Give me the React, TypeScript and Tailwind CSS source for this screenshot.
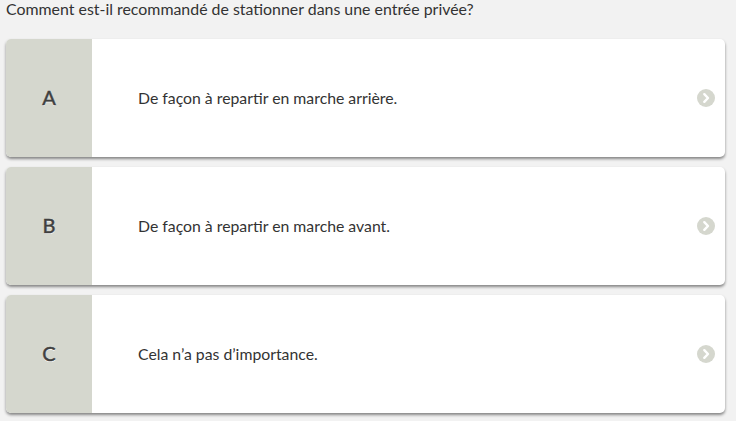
import React from 'react';

const ANSWERS = [
  { letter: 'A', text: 'De façon à repartir en marche arrière.' },
  { letter: 'B', text: 'De façon à repartir en marche avant.' },
  { letter: 'C', text: 'Cela n’a pas d’importance.' },
];

function Chevron() {
  return (
    <svg width="18" height="18" viewBox="0 0 18 18" className="shrink-0">
      <circle cx="9" cy="9" r="9" fill="#d5d7ce" />
      <path d="M7.3 5.2 L11 9 L7.3 12.8" fill="none" stroke="#fff" strokeWidth="2.4" strokeLinecap="round" strokeLinejoin="round" />
    </svg>
  );
}

export default function App() {
  return (
    <main className="w-[736px] h-[421px] overflow-hidden bg-[#f2f2f2] font-['Lato','Liberation_Sans',sans-serif] text-[#333]">
      <h1 className="px-[6px] h-[39px] text-[15.9px] leading-[18px]">
        Comment est-il recommandé de stationner dans une entrée privée?
      </h1>
      <div className="flex flex-col gap-[10px] pl-[6px] pr-[11px]">
        {ANSWERS.map((a) => (
          <div
            key={a.letter}
            className="flex h-[118px] rounded-[5px] bg-white overflow-hidden shadow-[0_2px_3px_rgba(0,0,0,0.45)]"
          >
            <div className="w-[86px] shrink-0 bg-[#d5d7ce] flex items-center justify-center pb-[3px] text-[20px] text-[#3f3f3f] [-webkit-text-stroke:0.5px_#3f3f3f] [text-shadow:0_1px_0_#fff]">
              {a.letter}
            </div>
            <div className="flex-1 flex items-center pl-[46px] pr-[10px] pb-[1px] text-[15.8px] text-[#333]">
              <span className="flex-1">{a.text}</span>
              <Chevron />
            </div>
          </div>
        ))}
      </div>
    </main>
  );
}
